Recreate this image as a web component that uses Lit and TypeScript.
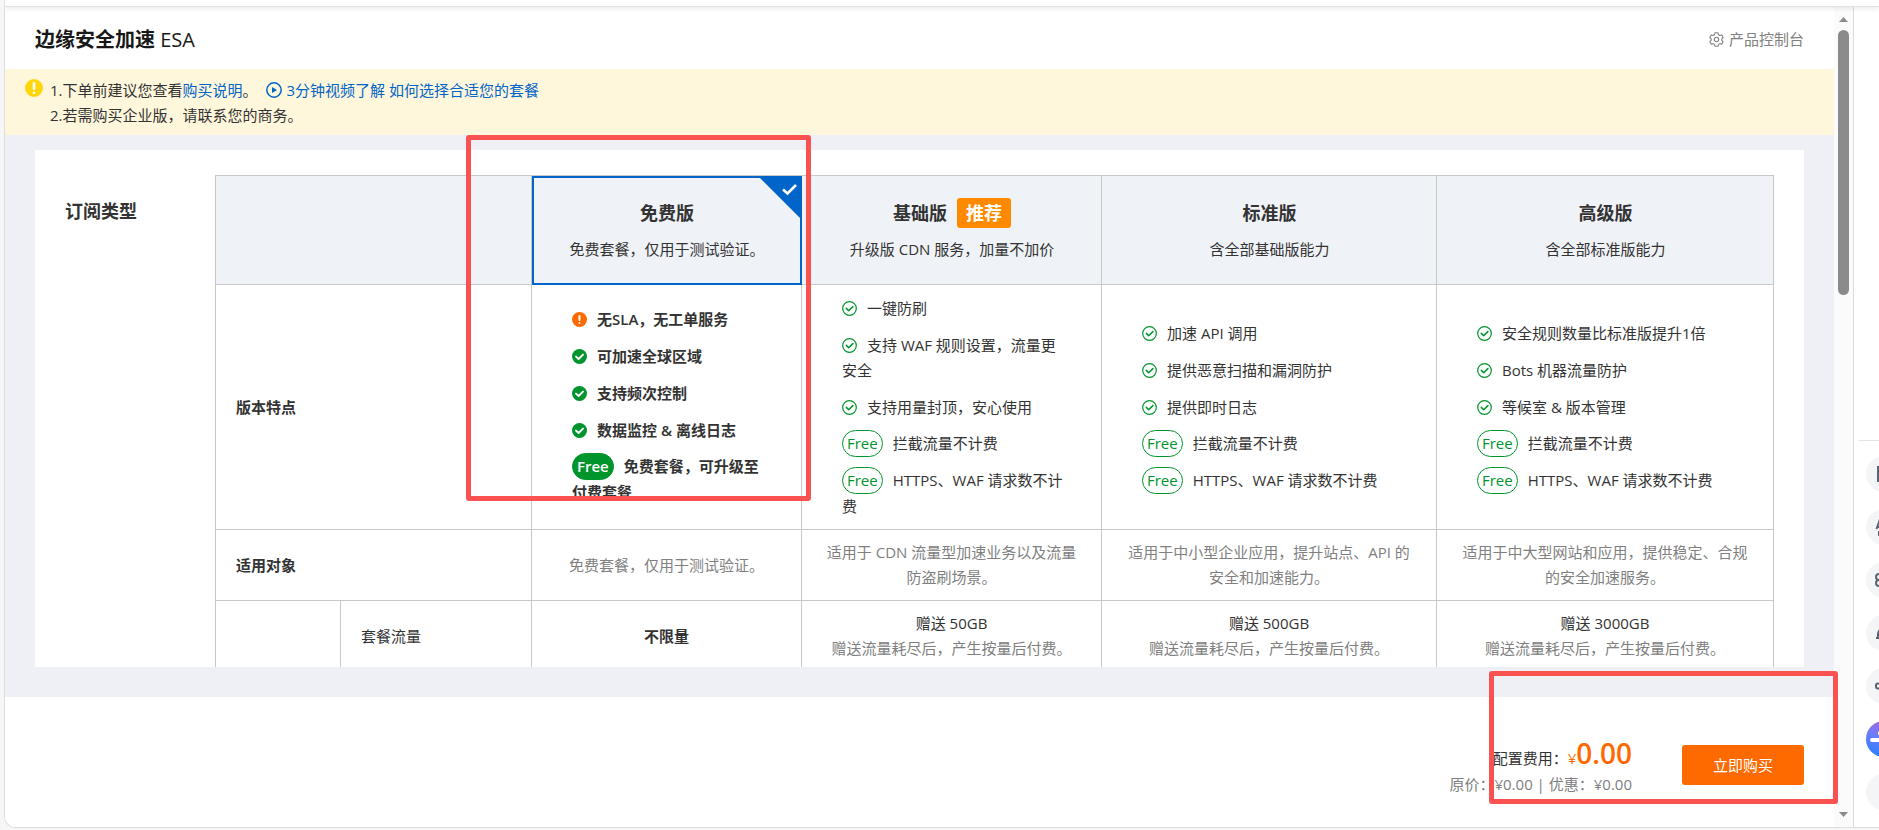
import { LitElement, html, css, svg, nothing } from "lit";
import { customElement, state } from "lit/decorators.js";

type Mark = "warn" | "done" | "ok" | "free";
interface Feature { mark: Mark; text: string; }
interface Plan {
  id: string;
  name: string;
  slogan: string;
  recommended?: boolean;
  strong?: boolean;
  features: Feature[];
  audience: string;
  traffic: string;
  note?: string;
}

const PLANS: Plan[] = [
  {
    id: "free", name: "免费版", slogan: "免费套餐，仅用于测试验证。", strong: true,
    features: [
      { mark: "warn", text: "无SLA，无工单服务" },
      { mark: "done", text: "可加速全球区域" },
      { mark: "done", text: "支持频次控制" },
      { mark: "done", text: "数据监控 & 离线日志" },
      { mark: "free", text: "免费套餐，可升级至付费套餐" },
    ],
    audience: "免费套餐，仅用于测试验证。", traffic: "不限量",
  },
  {
    id: "basic", name: "基础版", slogan: "升级版 CDN 服务，加量不加价", recommended: true,
    features: [
      { mark: "ok", text: "一键防刷" },
      { mark: "ok", text: "支持 WAF 规则设置，流量更安全" },
      { mark: "ok", text: "支持用量封顶，安心使用" },
      { mark: "free", text: "拦截流量不计费" },
      { mark: "free", text: "HTTPS、WAF 请求数不计费" },
    ],
    audience: "适用于 CDN 流量型加速业务以及流量防盗刷场景。",
    traffic: "赠送 50GB", note: "赠送流量耗尽后，产生按量后付费。",
  },
  {
    id: "standard", name: "标准版", slogan: "含全部基础版能力",
    features: [
      { mark: "ok", text: "加速 API 调用" },
      { mark: "ok", text: "提供恶意扫描和漏洞防护" },
      { mark: "ok", text: "提供即时日志" },
      { mark: "free", text: "拦截流量不计费" },
      { mark: "free", text: "HTTPS、WAF 请求数不计费" },
    ],
    audience: "适用于中小型企业应用，提升站点、API 的安全和加速能力。",
    traffic: "赠送 500GB", note: "赠送流量耗尽后，产生按量后付费。",
  },
  {
    id: "advanced", name: "高级版", slogan: "含全部标准版能力",
    features: [
      { mark: "ok", text: "安全规则数量比标准版提升1倍" },
      { mark: "ok", text: "Bots 机器流量防护" },
      { mark: "ok", text: "等候室 & 版本管理" },
      { mark: "free", text: "拦截流量不计费" },
      { mark: "free", text: "HTTPS、WAF 请求数不计费" },
    ],
    audience: "适用于中大型网站和应用，提供稳定、合规的安全加速服务。",
    traffic: "赠送 3000GB", note: "赠送流量耗尽后，产生按量后付费。",
  },
];

const markIcon = (mark: Mark) => {
  if (mark === "warn") {
    return html`<svg class="mark" viewBox="0 0 15 15" aria-hidden="true">
      <circle cx="7.5" cy="7.5" r="7.5" fill="#ff6a00"></circle>
      <rect x="6.5" y="3" width="2" height="6" rx="1" fill="#fff"></rect>
      <rect x="6.5" y="10" width="2" height="2" rx="1" fill="#fff"></rect></svg>`;
  }
  if (mark === "done") {
    return html`<svg class="mark" viewBox="0 0 15 15" aria-hidden="true">
      <circle cx="7.5" cy="7.5" r="7.5" fill="#00942c"></circle>
      <path d="M4 7.6 6.6 10 11 5.6" fill="none" stroke="#fff" stroke-width="1.9" stroke-linecap="round" stroke-linejoin="round"></path></svg>`;
  }
  return html`<svg class="mark" viewBox="0 0 15 15" aria-hidden="true">
    <circle cx="7.5" cy="7.5" r="6.8" fill="none" stroke="#00942c" stroke-width="1.2"></circle>
    <path d="M4.3 7.4 6.7 9.8 10.9 5.6" fill="none" stroke="#00942c" stroke-width="1.5" stroke-linecap="round" stroke-linejoin="round"></path></svg>`;
};

@customElement("plan-table")
class PlanTable extends LitElement {
  @state() private selected = "free";

  static styles = css`
    :host { display: block; }
    .plans { width: 100%; table-layout: fixed; border-collapse: collapse; color: #333; }
    .c-group { width: 125px; }
    .c-item { width: 191px; }
    .c-free { width: 270px; }
    .c-basic { width: 300px; }
    .c-standard { width: 335px; }
    .c-advanced { width: 337px; }
    th, td { border: 1px solid #c8c8c8; padding: 10px 20px; font-weight: 400; text-align: center; vertical-align: middle; }
    .corner { background: #eff2f7; }
    .plan { padding: 0; background: #eff2f7; height: 108px; }
    .pick {
      position: relative; display: flex; flex-direction: column; align-items: center; justify-content: center; gap: 9px;
      box-sizing: border-box; width: calc(100% + 1px); height: 109px; margin: 0 -1px -1px 0; padding: 0 0 2px;
      border: 2px solid transparent; background: none; color: inherit; font: inherit; cursor: pointer;
    }
    .pick.on { border-color: #0064c8; }
    .name { display: flex; align-items: center; gap: 10px; font-size: 18px; line-height: 30px; font-weight: 700; }
    .badge { padding: 0 9px; border-radius: 3px; background: #ff8a00; color: #fff; }
    .corner-mark { position: absolute; top: 0; right: 0; width: 40px; height: 40px; }
    .row-name { text-align: left; font-weight: 700; }
    .row-item { text-align: left; }
    .list { display: flex; flex-direction: column; gap: 10px; margin: 0; padding: 0 16px 0 20px; list-style: none; text-align: left; }
    .plain { padding: 1px 0; }
    .plain + .perk { margin-top: -1px; }
    .strong { font-weight: 600; }
    .list.strong { padding-bottom: 4px; }
    .mark { width: 15px; height: 15px; margin-right: 10px; vertical-align: -2px; }
    .free {
      display: inline-block; box-sizing: border-box; height: 27px; margin-right: 10px; padding: 0 4px;
      border: 1px solid #00942c; border-radius: 14px; color: #00942c;
    }
    .strong .free { background: #00942c; color: #fff; }
    .muted { color: #808080; }
    .note { display: block; color: #808080; }
  `;

  render() {
    return html`
      <table class="plans">
        <colgroup>
          <col class="c-group"><col class="c-item">
          ${PLANS.map((p) => html`<col class="c-${p.id}">`)}
        </colgroup>
        <thead>
          <tr>
            <td class="corner" colspan="2"></td>
            ${PLANS.map((p) => html`
              <th class="plan" scope="col">
                <button class="pick ${p.id === this.selected ? "on" : ""}" type="button"
                  aria-pressed=${p.id === this.selected} @click=${() => (this.selected = p.id)}>
                  <span class="name">${p.name}${p.recommended ? html`<span class="badge">推荐</span>` : nothing}</span>
                  <span>${p.slogan}</span>
                  ${p.id === this.selected ? html`
                    <svg class="corner-mark" viewBox="0 0 40 40" aria-hidden="true">
                      <path d="M0 0H40V40Z" fill="#0064c8"></path>
                      <path d="M23 11.5 27.500 15.500 36 7" fill="none" stroke="#fff" stroke-width="2.600"></path>
                    </svg>` : nothing}
                </button>
              </th>`)}
          </tr>
        </thead>
        <tbody>
          <tr>
            <th class="row-name" scope="row" colspan="2">版本特点</th>
            ${PLANS.map((p) => html`
              <td><ul class="list ${p.strong ? "strong" : ""}">
                ${p.features.map((f) => f.mark === "free"
                  ? html`<li class="perk"><span class="free">Free</span>${f.text}</li>`
                  : html`<li class="plain">${markIcon(f.mark)}${f.text}</li>`)}
              </ul></td>`)}
          </tr>
          <tr>
            <th class="row-name" scope="row" colspan="2">适用对象</th>
            ${PLANS.map((p) => html`<td class="muted">${p.audience}</td>`)}
          </tr>
          <tr>
            <td></td>
            <th class="row-item" scope="row">套餐流量</th>
            ${PLANS.map((p) => html`
              <td class=${p.strong ? "strong" : ""}>${p.traffic}${p.note ? html`<span class="note">${p.note}</span>` : nothing}</td>`)}
          </tr>
        </tbody>
      </table>`;
  }
}

const TOOLS = [
  { label: "文档", glyph: svg`<path d="M12 11h14v14H12z"></path>` },
  { label: "翻译", glyph: svg`<path d="M10.500 20 13 13l2.500 7M11.500 18h3M13 22v4h5M13 11h5"></path>` },
  { label: "应用", glyph: svg`<circle cx="13" cy="15" r="3"></circle><circle cx="13" cy="21" r="3"></circle><circle cx="22" cy="15" r="3"></circle>` },
  { label: "通知", glyph: svg`<path d="M10 23h15M12 23v-4a5 5 0 0 1 10 0v4"></path>` },
  { label: "密钥", glyph: svg`<rect x="10" y="15.500" width="6" height="5" rx="2"></rect><path d="M16 18h9"></path>` },
];

@customElement("side-tools")
class SideTools extends LitElement {
  static styles = css`
    :host { display: flex; flex-direction: column; padding-left: 5px; }
    .rule { height: 1px; background: #e4e4e4; }
    .stack { display: flex; flex-direction: column; gap: 17px; padding: 15px 0 0 7px; }
    .tool { flex: none; width: 36px; height: 36px; padding: 0; border: 0; border-radius: 50%; background: #f4f5f7; overflow: hidden; }
    .tool svg { display: block; width: 36px; height: 36px; fill: none; stroke: #5c6470; stroke-width: 2; }
    .bot { background: linear-gradient(200deg, #c060d0, #6a7cf8 50%, #1c80ff); }
    .bot svg { stroke: #fff; stroke-width: 4; stroke-linecap: round; }
  `;

  render() {
    return html`
      <div class="rule"></div>
      <div class="stack">
        ${TOOLS.map((t) => html`<button class="tool" type="button" aria-label=${t.label}><svg viewBox="0 0 36 36">${t.glyph}</svg></button>`)}
        <button class="tool bot" type="button" aria-label="智能助手"><svg viewBox="0 0 36 36"><path d="M6 19H30M14 12V12.500"></path></svg></button>
        <button class="tool" type="button" aria-label="更多"></button>
      </div>`;
  }
}

@customElement("app-root")
class AppRoot extends LitElement {
  static styles = css`
    :host {
      display: block; box-sizing: border-box; height: 100vh; padding: 0 0 2px 4px; overflow: hidden; position: relative;
      background: #f6f6f6; color: #333;
      font: 15px/25px "Open Sans", "Noto Sans CJK SC", sans-serif;
    }
    .window {
      display: flex; flex-direction: column; box-sizing: border-box; height: 100%; overflow: hidden;
      border: solid #dedede; border-width: 0 0 1px 1px; border-bottom-left-radius: 12px; background: #fff;
    }
    .topbar { flex: none; height: 6px; border-bottom: 1px solid #e2e2e2; box-shadow: 0 2px 5px rgba(0, 0, 0, 0.08); z-index: 1; }
    .body { flex: 1; min-height: 0; display: grid; grid-template-columns: minmax(0, 1fr) 20px 25px; }
    .page { display: flex; flex-direction: column; min-height: 0; background: #eff0f5; }
    .head { display: flex; align-items: center; justify-content: space-between; box-sizing: border-box; height: 62px; padding: 3px 30px 0; background: #fff; }
    .title { margin: 0; color: #181818; font-size: 20px; line-height: 30px; font-weight: 700; }
    .latin { font-weight: 400; }
    .console { display: flex; align-items: center; gap: 5px; color: #808080; text-decoration: none; }
    .console svg { width: 15px; height: 15px; }
    .notice { display: flex; gap: 7px; padding: 9px 20px 7px; border-radius: 2px; background: #fff7db; }
    .notice > svg { flex: none; width: 18px; height: 18px; margin-top: 1px; }
    .notice p { margin: 0; }
    .link { color: #0064c8; text-decoration: none; }
    .video { margin-left: 5px; }
    .video svg { width: 16px; height: 16px; margin-right: 4px; vertical-align: -2px; }
    .card {
      flex: 1; min-height: 0; display: grid; grid-template-columns: 150px minmax(0, 1fr); align-items: start;
      margin: 15px 30px 30px; padding: 25px 30px 0; overflow: hidden; background: #fff;
    }
    .label { margin: 24px 0 0; font-size: 18px; line-height: 25px; font-weight: 700; }
    .foot { display: flex; align-items: center; justify-content: flex-end; gap: 50px; height: 130px; padding: 6px 30px 0; box-sizing: border-box; background: #fff; }
    .sum { padding-top: 7px; text-align: right; }
    .line { display: flex; align-items: baseline; justify-content: flex-end; line-height: 26px; }
    .yen { color: #ff6a00; }
    .amount { color: #ff6a00; font-size: 28px; font-weight: 600; }
    .old { color: #808080; }
    .buy { width: 122px; height: 40px; padding: 0; border: 0; border-radius: 3px; background: #ff6a00; color: #fff; font: inherit; }
    .scroll { display: flex; flex-direction: column; align-items: center; padding: 9px 0; border-right: 1px solid #dcdcdc; background: #fbfbfb; }
    .arrow { width: 9px; height: 6px; fill: #8b8b8b; }
    .thumb { width: 11px; height: 265px; margin: 8px 0 auto; border-radius: 6px; background: #8b8b8b; }
    .side { padding-top: 433px; background: #fff; overflow: hidden; }
    .frame { position: absolute; box-sizing: border-box; border: 5px solid #fa5151; border-radius: 3px; pointer-events: none; }
    .frame-plan { left: 466px; top: 135px; width: 345px; height: 366px; }
    .frame-pay { right: 41px; bottom: 26px; width: 349px; height: 133px; }
  `;

  render() {
    return html`
      <div class="window">
        <div class="topbar"></div>
        <div class="body">
          <main class="page">
            <header class="head">
              <h1 class="title">边缘安全加速 <span class="latin">ESA</span></h1>
              <a class="console" href="#console">
                <svg viewBox="0 0 15 15" fill="none" stroke="#808080" stroke-width="1.100" stroke-linejoin="round" aria-hidden="true">
                  <path d="M6 .8h3l.5 1.900 1.300.8 1.900-.6 1.500 2.600-1.400 1.300v1.500l1.400 1.300-1.500 2.600-1.900-.6-1.300.8-.5 1.900H6l-.5-1.900-1.300-.8-1.900.6L.8 9.600l1.400-1.300V6.800L.8 5.500l1.500-2.600 1.900.6 1.300-.8Z"></path>
                  <circle cx="7.500" cy="7.500" r="2.200"></circle>
                </svg>产品控制台</a>
            </header>
            <section class="notice">
              <svg viewBox="0 0 18 18" aria-hidden="true">
                <circle cx="9" cy="9" r="9" fill="#ffd60a"></circle>
                <rect x="7.700" y="3" width="2.600" height="8" rx="1" fill="#fff"></rect>
                <rect x="7.700" y="12.500" width="2.600" height="2.500" rx="1" fill="#fff"></rect>
              </svg>
              <div>
                <p>1.下单前建议您查看<a class="link" href="#guide">购买说明</a>。
                  <a class="link video" href="#video"><svg viewBox="0 0 16 16" aria-hidden="true">
                    <circle cx="8" cy="8" r="7.200" fill="none" stroke="#0064c8" stroke-width="1.500"></circle>
                    <path d="M6 5v6l5-3Z" fill="#0064c8"></path></svg>3分钟视频了解 如何选择合适您的套餐</a></p>
                <p>2.若需购买企业版，请联系您的商务。</p>
              </div>
            </section>
            <section class="card">
              <h2 class="label">订阅类型</h2>
              <plan-table></plan-table>
            </section>
            <footer class="foot">
              <div class="sum">
                <div class="line">配置费用：<span class="yen">¥</span><span class="amount">0.00</span></div>
                <div class="line old">原价：¥0.00 | 优惠：¥0.00</div>
              </div>
              <button class="buy" type="button">立即购买</button>
            </footer>
          </main>
          <div class="scroll" aria-hidden="true">
            <svg class="arrow" viewBox="0 0 9 6"><path d="M0 6 4.500 1 9 6Z"></path></svg>
            <div class="thumb"></div>
            <svg class="arrow" viewBox="0 0 9 6"><path d="M0 0H9L4.500 5Z"></path></svg>
          </div>
          <aside class="side"><side-tools></side-tools></aside>
        </div>
      </div>
      <div class="frame frame-plan"></div>
      <div class="frame frame-pay"></div>`;
  }
}
